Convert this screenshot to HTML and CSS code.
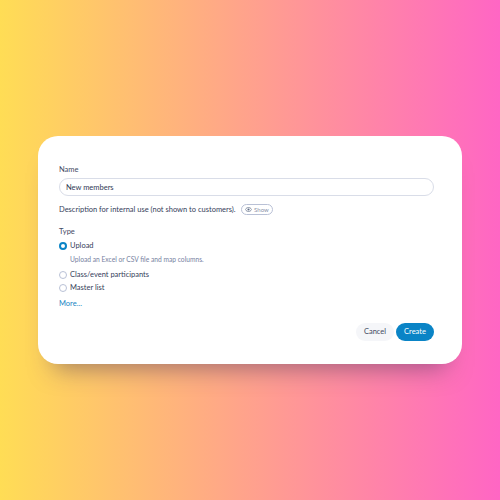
FILE: index.html
```html
<!DOCTYPE html>
<html lang="en">
<head>
<meta charset="utf-8">
<title>New list</title>
<link rel="stylesheet" href="styles.css">
</head>
<body>
<main class="stage">
  <form class="card">
    <label class="label">Name</label>
    <div class="input">New members</div>
    <div class="desc-row">
      <span>Description for internal use (not shown to customers).</span>
      <span class="show">
        <svg class="eye" viewBox="0 0 12 8" width="7" height="5"><path d="M.5 4C2 1.600 4 .6 6 .6s4 1 5.500 3.400C10 6.400 8 7.400 6 7.400S2 6.400.5 4z" fill="none" stroke="#5b6b85" stroke-width="1.200"/><circle cx="6" cy="4" r="1.800" fill="#5b6b85"/></svg>
        Show
      </span>
    </div>
    <div class="label type-label">Type</div>
    <div class="option first"><span class="radio on"></span>Upload</div>
    <div class="hint">Upload an Excel or CSV file and map columns.</div>
    <div class="option second"><span class="radio"></span>Class/event participants</div>
    <div class="option third"><span class="radio"></span>Master list</div>
    <a class="more">More...</a>
    <div class="actions">
      <span class="btn cancel">Cancel</span>
      <span class="btn create">Create</span>
    </div>
  </form>
</main>
</body>
</html>
```
FILE: styles.css
```css
* { box-sizing: border-box; }
html, body { margin: 0; height: 100%; }
body {
  font-family: "Lato", "Noto Sans", sans-serif;
  color: #35405a;
  font-size: 7.500px;
  line-height: 10px;
}
.stage {
  width: 500px;
  height: 500px;
  display: flex;
  align-items: flex-start;
  justify-content: center;
  padding-top: 136px;
  background: linear-gradient(90deg, #ffdd55 0%, #ff66c4 100%);
}
.card {
  width: 424px;
  height: 228px;
  background: #fff;
  border-radius: 20px;
  padding: 29px 28px 0 21px;
  display: flex;
  flex-direction: column;
  box-shadow: 0 20px 24px -16px rgba(70, 50, 90, 0.5);
}
.label { display: block; color: #3f4a63; }
.input {
  margin-top: 3px;
  height: 18px;
  border: 1px solid #d9dde8;
  border-radius: 9px;
  padding: 0 6px;
  line-height: 18px;
  color: #2f3a55;
}
.desc-row {
  margin-top: 8px;
  display: flex;
  align-items: center;
  gap: 5px;
  height: 11px;
}
.show {
  display: inline-flex;
  align-items: center;
  gap: 2px;
  height: 11px;
  padding: 0 3.500px;
  border: 1px solid #b9c1d6;
  border-radius: 6px;
  font-size: 6px;
  color: #8b94aa;
}
.type-label { margin-top: 12px; }
.option { display: flex; align-items: center; gap: 3px; color: #35405a; }
.first { margin-top: 4px; }
.second { margin-top: 6px; }
.third { margin-top: 3px; }
.radio {
  width: 8px;
  height: 8px;
  border-radius: 50%;
  border: 1px solid #b9c1d6;
  background: #fff;
}
.radio.on { border: 2.500px solid #0a84c6; }
.hint { margin: 3px 0 0 11px; font-size: 6.700px; color: #77829f; }
.more { margin-top: 6px; color: #1b86c4; }
.actions {
  margin-top: 14px;
  display: flex;
  justify-content: flex-end;
  gap: 2px;
}
.btn {
  height: 18px;
  border-radius: 9px;
  line-height: 18px;
  text-align: center;
}
.cancel { width: 38px; background: #f5f6f9; color: #3f4a63; }
.create { width: 38px; background: #0a84c6; color: #fff; }
```
